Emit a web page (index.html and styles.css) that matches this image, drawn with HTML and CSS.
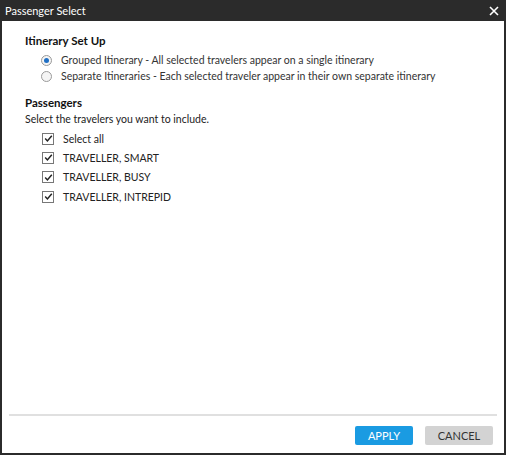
FILE: index.html
```html
<!DOCTYPE html>
<html>
<head>
<meta charset="utf-8">
<link rel="stylesheet" href="styles.css">
</head>
<body>
<div class="dialog">
  <div class="titlebar">
    <span class="title">Passenger Select</span>
    <svg class="close" width="10" height="10" viewBox="0 0 10 10"><path d="M1 1 L9 9 M9 1 L1 9" stroke="#fff" stroke-width="1.6"/></svg>
  </div>
  <div class="content">
    <div class="heading first">Itinerary Set Up</div>
    <div class="options">
      <label class="opt"><span class="radio checked"></span>Grouped Itinerary - All selected travelers appear on a single itinerary</label>
      <label class="opt"><span class="radio"></span>Separate Itineraries - Each selected traveler appear in their own separate itinerary</label>
    </div>
    <div class="heading second">Passengers</div>
    <div class="desc">Select the travelers you want to include.</div>
    <div class="checks">
      <label class="chk"><span class="box"><svg width="9" height="9" viewBox="0 0 9 9"><path d="M1.2 4.6 L3.4 6.9 L7.8 1.8" fill="none" stroke="#222" stroke-width="1.5"/></svg></span>Select all</label>
      <label class="chk"><span class="box"><svg width="9" height="9" viewBox="0 0 9 9"><path d="M1.2 4.6 L3.4 6.9 L7.8 1.8" fill="none" stroke="#222" stroke-width="1.5"/></svg></span>TRAVELLER, SMART</label>
      <label class="chk"><span class="box"><svg width="9" height="9" viewBox="0 0 9 9"><path d="M1.2 4.6 L3.4 6.9 L7.8 1.8" fill="none" stroke="#222" stroke-width="1.5"/></svg></span>TRAVELLER, BUSY</label>
      <label class="chk"><span class="box"><svg width="9" height="9" viewBox="0 0 9 9"><path d="M1.2 4.6 L3.4 6.9 L7.8 1.8" fill="none" stroke="#222" stroke-width="1.5"/></svg></span>TRAVELLER, INTREPID</label>
    </div>
  </div>
  <div class="footer">
    <button class="btn apply">APPLY</button>
    <button class="btn cancel">CANCEL</button>
  </div>
</div>
</body>
</html>
```
FILE: styles.css
```css
html, body { margin: 0; padding: 0; background: #fff; }
body { font-family: Lato, "Open Sans", sans-serif; font-size: 10.5px; color: #222; }
.dialog {
  width: 506px; height: 455px; box-sizing: border-box;
  border: 2px solid #2b2b2b; border-top: none;
  display: flex; flex-direction: column;
}
.titlebar {
  height: 21px; background: #2b2b2b; color: #fff;
  display: flex; align-items: center; justify-content: space-between;
  padding: 0 6px 0 5px; margin: 0 -2px; box-sizing: border-box;
}
.title { font-size: 11px; }
.close { margin-right: 1px; }
.content { flex: 1; padding-left: 23px; }
.heading { font-weight: 700; font-size: 11.5px; line-height: 14px; color: #111; }
.heading.first { margin-top: 13px; }
.heading.second { margin-top: 12px; }
.options { display: flex; flex-direction: column; margin-top: 4px; padding-left: 16px; }
.opt { display: flex; align-items: center; height: 16px; color: #333; }
.radio {
  width: 9px; height: 9px; border-radius: 50%; border: 1px solid #9a9a9a;
  margin-right: 9px; box-sizing: content-box; display: flex; align-items: center; justify-content: center;
  background: #f4f4f4;
}
.radio.checked::after { content: ""; width: 5px; height: 5px; border-radius: 50%; background: #1f6fc4; }
.desc { margin-top: 2px; line-height: 14px; color: #222; }
.checks { display: flex; flex-direction: column; margin-top: 3px; padding-left: 17px; }
.chk { display: flex; align-items: center; height: 19.3px; color: #222; }
.box {
  width: 10px; height: 10px; border: 1px solid #777; margin-right: 9px;
  display: flex; align-items: center; justify-content: center; background: #fff;
}
.footer {
  margin: 0 7px; border-top: 2px solid #e0e0e0; height: 37px;
  display: flex; justify-content: flex-end; align-items: center; gap: 12px; padding-right: 4px; padding-top: 0;
}
.btn {
  font-family: Lato, "Open Sans", sans-serif; font-size: 11px;
  height: 19px; border: none; border-radius: 2px; padding: 0; margin-top: 1px;
}
.apply { width: 58px; background: #1a9be2; color: #fff; }
.cancel { width: 68px; background: #d3d3d3; color: #333; }
```
